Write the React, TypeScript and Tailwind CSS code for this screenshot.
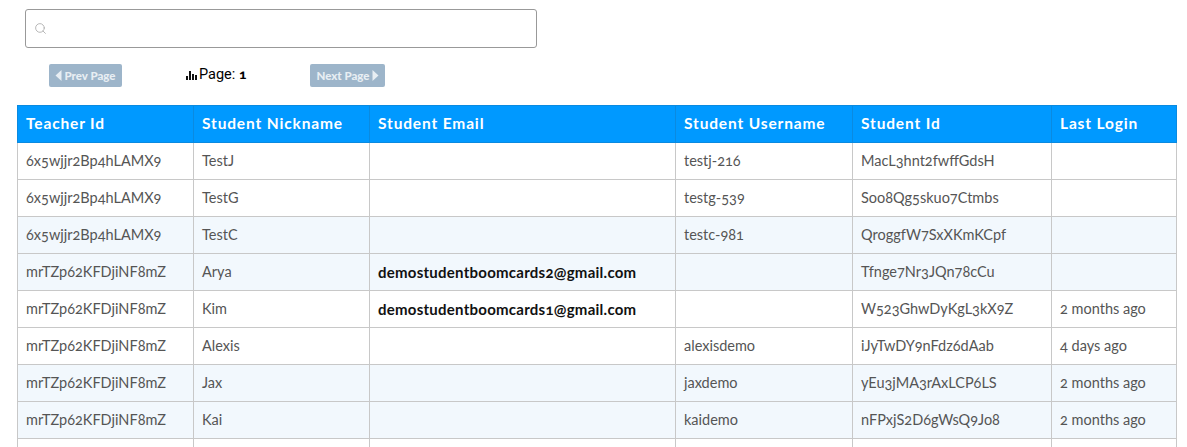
import { Search } from "lucide-react";

const rows = [
  ["6x5wjjr2Bp4hLAMX9", "TestJ", "", "testj-216", "MacL3hnt2fwffGdsH", ""],
  ["6x5wjjr2Bp4hLAMX9", "TestG", "", "testg-539", "Soo8Qg5skuo7Ctmbs", ""],
  ["6x5wjjr2Bp4hLAMX9", "TestC", "", "testc-981", "QroggfW7SxXKmKCpf", ""],
  ["mrTZp62KFDjiNF8mZ", "Arya", "demostudentboomcards2@gmail.com", "", "Tfnge7Nr3JQn78cCu", ""],
  ["mrTZp62KFDjiNF8mZ", "Kim", "demostudentboomcards1@gmail.com", "", "W523GhwDyKgL3kX9Z", "2 months ago"],
  ["mrTZp62KFDjiNF8mZ", "Alexis", "", "alexisdemo", "iJyTwDY9nFdz6dAab", "4 days ago"],
  ["mrTZp62KFDjiNF8mZ", "Jax", "", "jaxdemo", "yEu3jMA3rAxLCP6LS", "2 months ago"],
  ["mrTZp62KFDjiNF8mZ", "Kai", "", "kaidemo", "nFPxjS2D6gWsQ9Jo8", "2 months ago"],
  ["", "", "", "", "", ""],
];
const heads = ["Teacher Id", "Student Nickname", "Student Email", "Student Username", "Student Id", "Last Login"];
const tint = [2, 3, 6, 7];
const widths = ["w-[176px]", "w-[176px]", "w-[306px]", "w-[177px]", "w-[199px]", "w-[125px]"];

export default function App() {
  return (
    <div className="h-[447px] overflow-hidden bg-white font-['Lato',sans-serif] [font-feature-settings:'onum']">
      <div className="ml-[25px] mt-[9px] flex h-[39px] w-[512px] items-center rounded-[3px] border border-[#999999] pl-[8px]">
        <Search size={13} strokeWidth={1.5} className="text-[#a8a8a8]" />
      </div>
      <div className="mt-[16px] flex h-[23px] items-center pl-[49px]">
        <button className="flex h-[23px] w-[73px] items-center justify-center gap-[2px] rounded-[2px] bg-[#9db5ca] text-[11.5px] font-black text-[#e8eef3]">
          <svg width="7" height="11" viewBox="0 0 7 11"><path d="M6.5 0v11L0.5 5.5z" fill="#e8eef3" /></svg>
          Prev Page
        </button>
        <div className="ml-[64px] flex w-[124px] items-center gap-[2px] pb-[2px] text-[14.5px] text-black">
          <svg width="11" height="10" viewBox="0 0 11 10" fill="#111111">
            <rect x="0" y="6" width="2" height="4" />
            <rect x="3" y="1" width="2" height="9" />
            <rect x="6" y="4" width="2" height="6" />
            <rect x="9" y="5" width="2" height="5" />
          </svg>
          <span className="font-['Roboto',sans-serif]">Page: <b className="font-['Lato',sans-serif] text-[14px] font-black">1</b></span>
        </div>
        <button className="flex h-[23px] w-[75px] items-center justify-center gap-[2px] rounded-[2px] bg-[#9db5ca] text-[11.5px] font-black text-[#e8eef3]">
          Next Page
          <svg width="7" height="11" viewBox="0 0 7 11"><path d="M0.5 0v11L6.5 5.5z" fill="#e8eef3" /></svg>
        </button>
      </div>
      <table className="ml-[17px] mt-[18px] w-[1159px] table-fixed border-collapse text-[14.5px] text-[#555555]">
        <thead>
          <tr className="h-[37px] bg-[#0099ff]">
            {heads.map((h, i) => (
              <th key={h} className={`${widths[i]} border border-[#0a8ae0] px-2 text-left text-[15.5px] font-bold tracking-[0.85px] text-white`}>{h}</th>
            ))}
          </tr>
        </thead>
        <tbody>
          {rows.map((r, i) => (
            <tr key={i} className={`h-[37px] ${tint.includes(i) ? "bg-[#f2f8fd]" : "bg-white"}`}>
              {r.map((c, j) => (
                <td key={j} className={`border border-[#c8c8c8] px-2 whitespace-nowrap ${j === 2 ? "text-[15px] tracking-[0.25px] font-bold text-[#111111]" : ""}`}>{c}</td>
              ))}
            </tr>
          ))}
        </tbody>
      </table>
    </div>
  );
}
